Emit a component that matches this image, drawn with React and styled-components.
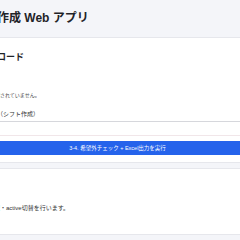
import React from "react";
import styled, { createGlobalStyle } from "styled-components";

const GlobalStyle = createGlobalStyle`
  html, body {
    margin: 0;
    padding: 0;
    background: #f4f5f9;
    overflow: hidden;
  }
  body {
    font-family: "Liberation Sans", "Noto Sans CJK JP", sans-serif;
    color: #222;
  }
`;

function App() {
  return (
    <>
      <GlobalStyle />
      <Page>
        <Header>
          <Title>シフト作成 Web アプリ</Title>
        </Header>

        <Card>
          <SectionTitle>アップロード</SectionTitle>
          <FileStatus>勤務表が選択されていません。</FileStatus>
          <SelectBox>勤務希望（シフト作成）</SelectBox>
          <Divider />
          <RunButton type="button">3-4. 希望外チェック + Excel出力を実行</RunButton>
        </Card>

        <Card $bottom>
          <Note>シート選択・active切替を行います。</Note>
        </Card>
      </Page>
    </>
  );
}
export default App;

const Page = styled.div`
  width: 325px;
  margin-left: -45px;
  display: flex;
  flex-direction: column;
  gap: 5px;
`;

const Header = styled.div`
  height: 32px;
  padding-left: 6px;
  display: flex;
  align-items: center;
`;

const Title = styled.h1`
  margin: 0;
  font-size: 12px;
  font-weight: 700;
  white-space: nowrap;
  color: #1f2328;
`;

const Card = styled.div`
  background: #fff;
  border-top: 1px solid #e6e7ec;
  border-bottom: 1px solid #e6e7ec;
  padding: ${(p) => (p.$bottom ? "35px 15px 22px" : "13px 15px 7px")};
  display: flex;
  flex-direction: column;
`;

const SectionTitle = styled.h2`
  margin: 0;
  font-size: 9px;
  line-height: 13px;
  font-weight: 700;
  white-space: nowrap;
  color: #1f2328;
`;

const FileStatus = styled.div`
  margin-top: 28px;
  font-size: 5px;
  line-height: 7px;
  color: #444;
  white-space: nowrap;
`;

const SelectBox = styled.div`
  margin-top: 6px;
  height: 17px;
  box-sizing: border-box;
  padding-left: 3px;
  border-bottom: 1px solid #d6d7dc;
  display: flex;
  align-items: center;
  font-size: 6px;
  color: #333;
  white-space: nowrap;
`;

const Divider = styled.div`
  margin-top: 13px;
  height: 1px;
  background: #f1e6e9;
`;

const RunButton = styled.button`
  margin-top: 5px;
  height: 14px;
  border: none;
  border-radius: 2px;
  background: #2563eb;
  color: #fff;
  font-family: inherit;
  font-size: 5.5px;
  padding: 0;
  white-space: nowrap;
`;

const Note = styled.p`
  margin: 0;
  font-size: 6px;
  line-height: 8px;
  color: #333;
  white-space: nowrap;
`;
